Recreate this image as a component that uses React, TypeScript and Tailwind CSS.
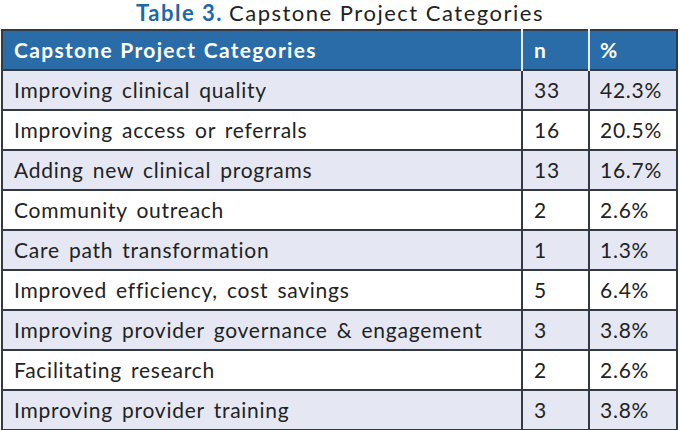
import React from 'react';

const rows: [string, string, string][] = [
  ['Improving clinical quality', '33', '42.3%'],
  ['Improving access or referrals', '16', '20.5%'],
  ['Adding new clinical programs', '13', '16.7%'],
  ['Community outreach', '2', '2.6%'],
  ['Care path transformation', '1', '1.3%'],
  ['Improved efficiency, cost savings', '5', '6.4%'],
  ['Improving provider governance & engagement', '3', '3.8%'],
  ['Facilitating research', '2', '2.6%'],
  ['Improving provider training', '3', '3.8%'],
];

export default function App() {
  return (
    <div className="w-[680px] h-[430px] bg-white font-['Lato',sans-serif] text-[#222]">
      <div className="h-[29px] flex items-center justify-center text-[22px] leading-[28px] tracking-[1.5px] pb-[3px]">
        <span className="font-bold text-[#1a6aab]">Table 3.</span>
        <span className="ml-[6px]">Capstone Project Categories</span>
      </div>
      <table className="ml-px w-[677px] border-collapse border-2 border-[#343a44] text-[21px] tracking-[0.75px] [word-spacing:3px]">
        <colgroup>
          <col className="w-[520px]" />
          <col className="w-[67px]" />
          <col />
        </colgroup>
        <thead>
          <tr className="h-[40px] bg-[#2a6ca8] text-white">
            <th className="text-left pl-[11px] font-bold tracking-[1.3px] [word-spacing:1px]">Capstone Project Categories</th>
            <th className="text-left pl-[11px] border-l-2 border-[#e8ecf4] font-bold">n</th>
            <th className="text-left pl-[10px] border-l-2 border-[#e8ecf4] font-bold">%</th>
          </tr>
        </thead>
        <tbody>
          {rows.map(([label, n, pct], i) => (
            <tr
              key={label}
              className={'h-[40px] border-t-2 border-[#343a44] ' + (i % 2 === 0 ? 'bg-[#e5e8f3]' : 'bg-white')}
            >
              <td className="pl-[11px]">{label}</td>
              <td className="pl-[11px] border-l-2 border-[#343a44]">{n}</td>
              <td className="pl-[10px] border-l-2 border-[#343a44]">{pct}</td>
            </tr>
          ))}
        </tbody>
      </table>
    </div>
  );
}
